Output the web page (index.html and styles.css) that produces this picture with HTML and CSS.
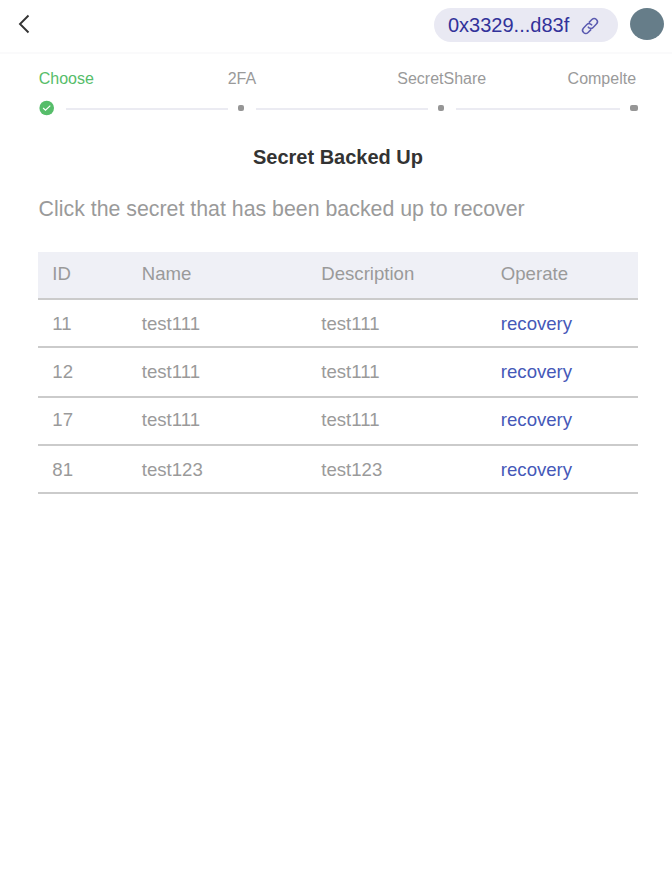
FILE: index.html
```html
<!DOCTYPE html>
<html lang="en">
<head>
<meta charset="utf-8">
<title>Secret Backed Up</title>
<link rel="stylesheet" href="styles.css">
</head>
<body>
<header class="topbar">
  <svg class="back" width="14" height="20" viewBox="0 0 14 20"><path d="M11.5 1.5 3 10 11.5 18.5"/></svg>
  <div class="account">
    <span class="address">0x3329...d83f</span>
    <svg class="link" width="20" height="20" viewBox="0 0 20 20"><g transform="rotate(-45 10 10)"><path d="M8.4 13.2H4.1a3.2 3.2 0 0 1 0-6.4h4.7a3.2 3.2 0 0 1 3.1 4.2"/><path d="M11.6 6.8h4.3a3.2 3.2 0 0 1 0 6.4h-4.7a3.2 3.2 0 0 1-3.1-4.2"/></g></svg>
  </div>
  <div class="avatar"></div>
</header>
<main class="content">
  <div class="labels">
    <span class="active">Choose</span><span>2FA</span><span>SecretShare</span><span>Compelte</span>
  </div>
  <div class="track">
    <svg class="check" width="16" height="16" viewBox="0 0 16 16"><circle cx="7.7" cy="8" r="7.3"/><path d="M4.1 8 6.5 10.1l4.8-4.5"/></svg>
    <i class="line"></i><i class="dot"></i><i class="line"></i><i class="dot"></i><i class="line"></i><i class="dot last"></i>
  </div>
  <h1>Secret Backed Up</h1>
  <p class="hint">Click the secret that has been backed up to recover</p>
  <div class="table">
    <div class="row head"><span>ID</span><span>Name</span><span>Description</span><span>Operate</span></div>
    <div class="row"><span>11</span><span>test111</span><span>test111</span><a>recovery</a></div>
    <div class="row tall"><span>12</span><span>test111</span><span>test111</span><a>recovery</a></div>
    <div class="row"><span>17</span><span>test111</span><span>test111</span><a>recovery</a></div>
    <div class="row"><span>81</span><span>test123</span><span>test123</span><a>recovery</a></div>
  </div>
</main>
</body>
</html>
```
FILE: styles.css
```css
* { box-sizing: border-box; }
body {
  margin: 0;
  background: #fff;
  color: #9a9a9a;
  font-family: "Liberation Sans", Arial, sans-serif;
}
svg { display: block; fill: none; flex: none; }
.topbar {
  display: flex;
  height: 54px;
  padding: 8px 8px 0 17px;
  border-bottom: 2px solid #fafafb;
}
.back { margin-top: 6px; stroke: #333; stroke-width: 1.9; }
.account {
  display: flex;
  align-items: center;
  width: 184px;
  height: 34px;
  margin-left: auto;
  padding-left: 14px;
  border-radius: 17px;
  background: #e9e9f3;
}
.address { width: 132px; color: #32329a; font-size: 20px; line-height: 36px; }
.link { margin-top: 1px; stroke: #5a5ab0; stroke-width: 1.5; }
.avatar {
  width: 34px;
  height: 32px;
  margin-left: 12px;
  border-radius: 50%;
  background: #667d89;
}
.content { padding: 15px 34px 0 38px; }
.labels {
  display: grid;
  grid-template-columns: 189px 169.6px 170.3px auto;
  padding-left: 0.7px;
  font-size: 16px;
  line-height: 20px;
}
.labels .active { color: #56bd6a; }
.track { display: flex; align-items: center; height: 16px; margin-top: 11px; padding-left: 1px; }
.check { margin-right: 11px; }
.check circle { fill: #56bd6a; }
.check path { stroke: #fff; stroke-width: 1.2; }
.line { height: 2px; margin-top: 2px; background: #ebebf2; }
.line:nth-of-type(1) { width: 162px; }
.line:nth-of-type(3) { width: 172px; }
.line:nth-of-type(5) { width: 164px; }
.dot {
  width: 6px;
  height: 6px;
  margin: 0 12px 0 10px;
  border-radius: 2px;
  background: #969696;
}
.dot.last { width: 8px; margin-right: 0; }
h1 {
  width: 600px;
  margin: 29px 0 0;
  color: #333;
  font-size: 20px;
  line-height: 24px;
  text-align: center;
}
.hint { margin: 27px 0 0; padding-left: 0.6px; font-size: 21.33px; line-height: 26px; white-space: nowrap; }
.table { width: 600px; margin-top: 30px; font-size: 18.6px; }
.row {
  display: grid;
  grid-template-columns: 89.5px 179.5px 179.5px 1fr;
  height: 48px;
  padding: 13px 14px 0 14.3px;
  border-bottom: 2px solid #cbcbcb;
  line-height: 22px;
}
.row.tall { height: 50px; }
.row:nth-child(4) { padding-top: 11px; }
.row.head { padding-top: 11px; background: #eff0f6; }
.row a { color: #4558b8; }
```
